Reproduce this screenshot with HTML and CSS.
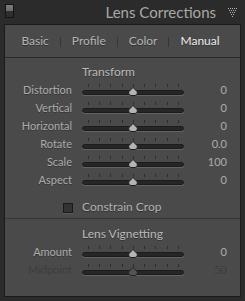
FILE: index.html
```html
<!DOCTYPE html>
<html lang="en">

<head>
    <meta charset="UTF-8">
    <title>Lens Corrections</title>
    <link rel="stylesheet" href="styles.css">
</head>

<body>

    <!-- Panel header -->
    <div class="header">
        <span class="switch"></span>
        <span class="title">Lens Corrections</span>
        <svg class="collapse" width="9" height="9" viewBox="0 0 9 9">
            <g fill="#b4b4b4">
                <rect x="0" y="0" width="1" height="1"/><rect x="2" y="0" width="1" height="1"/><rect x="4" y="0" width="1" height="1"/><rect x="6" y="0" width="1" height="1"/><rect x="8" y="0" width="1" height="1"/>
                <rect x="1" y="2" width="1" height="1"/><rect x="3" y="2" width="1" height="1"/><rect x="5" y="2" width="1" height="1"/><rect x="7" y="2" width="1" height="1"/>
                <rect x="2" y="4" width="1" height="1"/><rect x="4" y="4" width="1" height="1"/><rect x="6" y="4" width="1" height="1"/>
                <rect x="3" y="6" width="1" height="1"/><rect x="5" y="6" width="1" height="1"/>
                <rect x="4" y="8" width="1" height="1"/>
            </g>
        </svg>
    </div>

    <div class="panel">
        <div class="tabs">
            <span class="tab">Basic</span>
            <span class="sep"></span>
            <span class="tab">Profile</span>
            <span class="sep"></span>
            <span class="tab">Color</span>
            <span class="sep"></span>
            <span class="tab active">Manual</span>
        </div>

        <div class="section">
            <div class="heading">Transform</div>
            <div class="row">
                <span class="label">Distortion</span>
                <div class="slider"><div class="ticks"></div><div class="track"></div><svg class="thumb" viewBox="0 0 10 9"><path d="M5 0.5 L9.5 5 Q9.5 8.5 7 8.5 L3 8.5 Q0.5 8.5 0.5 5 Z"/></svg></div>
                <span class="value">0</span>
            </div>
            <div class="row">
                <span class="label">Vertical</span>
                <div class="slider"><div class="ticks"></div><div class="track"></div><svg class="thumb" viewBox="0 0 10 9"><path d="M5 0.5 L9.5 5 Q9.5 8.5 7 8.5 L3 8.5 Q0.5 8.5 0.5 5 Z"/></svg></div>
                <span class="value">0</span>
            </div>
            <div class="row">
                <span class="label">Horizontal</span>
                <div class="slider"><div class="ticks"></div><div class="track"></div><svg class="thumb" viewBox="0 0 10 9"><path d="M5 0.5 L9.5 5 Q9.5 8.5 7 8.5 L3 8.5 Q0.5 8.5 0.5 5 Z"/></svg></div>
                <span class="value">0</span>
            </div>
            <div class="row">
                <span class="label">Rotate</span>
                <div class="slider"><div class="ticks"></div><div class="track"></div><svg class="thumb" viewBox="0 0 10 9"><path d="M5 0.5 L9.5 5 Q9.5 8.5 7 8.5 L3 8.5 Q0.5 8.5 0.5 5 Z"/></svg></div>
                <span class="value">0.0</span>
            </div>
            <div class="row">
                <span class="label">Scale</span>
                <div class="slider"><div class="ticks"></div><div class="track"></div><svg class="thumb" viewBox="0 0 10 9"><path d="M5 0.5 L9.5 5 Q9.5 8.5 7 8.5 L3 8.5 Q0.5 8.5 0.5 5 Z"/></svg></div>
                <span class="value">100</span>
            </div>
            <div class="row">
                <span class="label">Aspect</span>
                <div class="slider"><div class="ticks"></div><div class="track"></div><svg class="thumb" viewBox="0 0 10 9"><path d="M5 0.5 L9.5 5 Q9.5 8.5 7 8.5 L3 8.5 Q0.5 8.5 0.5 5 Z"/></svg></div>
                <span class="value">0</span>
            </div>

            <label class="check">
                <span class="box"></span>
                <span>Constrain Crop</span>
            </label>
        </div>

        <div class="section last">
            <div class="heading">Lens Vignetting</div>
            <div class="row">
                <span class="label">Amount</span>
                <div class="slider"><div class="ticks"></div><div class="track"></div><svg class="thumb" viewBox="0 0 10 9"><path d="M5 0.5 L9.5 5 Q9.5 8.5 7 8.5 L3 8.5 Q0.5 8.5 0.5 5 Z"/></svg></div>
                <span class="value">0</span>
            </div>
            <div class="row disabled">
                <span class="label">Midpoint</span>
                <div class="slider"><div class="ticks"></div><div class="track"></div><svg class="thumb" viewBox="0 0 10 9"><path d="M5 0.5 L9.5 5 Q9.5 8.5 7 8.5 L3 8.5 Q0.5 8.5 0.5 5 Z"/></svg></div>
                <span class="value">50</span>
            </div>
        </div>
    </div>

</body>

</html>
```

FILE: styles.css
```css
body {
    margin: 0;
    font-family: Lato, "Liberation Sans", sans-serif;
    background-color: #2b2b2b;
    color: #b2b2b2;
    width: 245px;
    height: 301px;
    overflow: hidden;
}

/* ---------- header ---------- */
.header {
    height: 24px;
    display: flex;
    align-items: center;
}

.switch {
    align-self: flex-start;
    margin: 4px 0 0 5px;
    width: 7px;
    height: 12px;
    border: 1px solid #141414;
    background: linear-gradient(#7c7c7c 0, #6a6a6a 6px, #303030 6px, #2c2c2c 100%);
}

.title {
    margin-left: auto;
    font-size: 15px;
    line-height: 24px;
    color: #a8a8a8;
}

.collapse {
    margin: 1px 8px 0 12px;
}

/* ---------- panel ---------- */
.panel {
    margin: 0 4px;
    height: 271px;
    border: 1px solid #1b1b1b;
    background-color: #4a4a4a;
}

.tabs {
    height: 32px;
    display: flex;
    align-items: center;
    justify-content: center;
    gap: 11px;
    padding-right: 4px;
    border-bottom: 1px solid #2a2a2a;
    font-size: 12px;
    line-height: 18px;
}

.tab {
    color: #b4b4b4;
    text-shadow: 0 1px 0 rgba(0, 0, 0, 0.35);
}

.tab.active {
    color: #ececec;
}

.sep {
    width: 1px;
    height: 10px;
    margin-top: 2px;
    background-color: #363636;
}

.section {
    padding-top: 5px;
    border-bottom: 1px solid #363636;
}

.section.last {
    border-bottom: none;
    padding-top: 6px;
}

.heading {
    padding-left: 77px;
    font-size: 12px;
    line-height: 18px;
    color: #bababa;
    text-shadow: 0 1px 0 rgba(0, 0, 0, 0.35);
}

/* ---------- slider rows ---------- */
.row {
    display: grid;
    grid-template-columns: 67px 102px 1fr;
    column-gap: 10px;
    padding-right: 13px;
    height: 18px;
    font-size: 11px;
    line-height: 18px;
}

.label {
    text-align: right;
    color: #acacac;
    text-shadow: 0 1px 0 rgba(0, 0, 0, 0.3);
}

.value {
    text-align: right;
    color: #acacac;
}

.slider {
    position: relative;
}

.ticks {
    margin: 3px 0 0 6px;
    width: 91px;
    height: 3px;
    background: repeating-linear-gradient(to right, #2e2e2e 0, #2e2e2e 1px, transparent 1px, transparent 11.25px);
}

.track {
    margin-top: 3px;
    height: 3px;
    border: 1px solid #1c1c1c;
    border-radius: 3px;
    background-color: #262626;
    box-shadow: 0 1px 0 #636363;
}

.thumb {
    position: absolute;
    top: 6px;
    left: 46px;
    width: 10px;
    height: 9px;
}

.thumb path {
    fill: #b4b4b4;
    stroke: #1e1e1e;
    stroke-width: 1;
}

.row.disabled .label,
.row.disabled .value {
    color: #3c3c3c;
    text-shadow: 0 1px 0 rgba(255, 255, 255, 0.04);
}

.row.disabled .thumb path {
    fill: #545454;
    stroke: #262626;
}

/* ---------- checkbox ---------- */
.check {
    display: flex;
    align-items: center;
    gap: 9px;
    margin-top: 9px;
    padding: 0 0 2px 58px;
    height: 18px;
    font-size: 12px;
    line-height: 18px;
    color: #b2b2b2;
    text-shadow: 0 1px 0 rgba(0, 0, 0, 0.35);
}

.box {
    width: 8px;
    height: 8px;
    margin-top: 2px;
    border: 1px solid #1a1a1a;
    background-color: #333;
    box-shadow: 0 1px 0 #5c5c5c;
}
```
